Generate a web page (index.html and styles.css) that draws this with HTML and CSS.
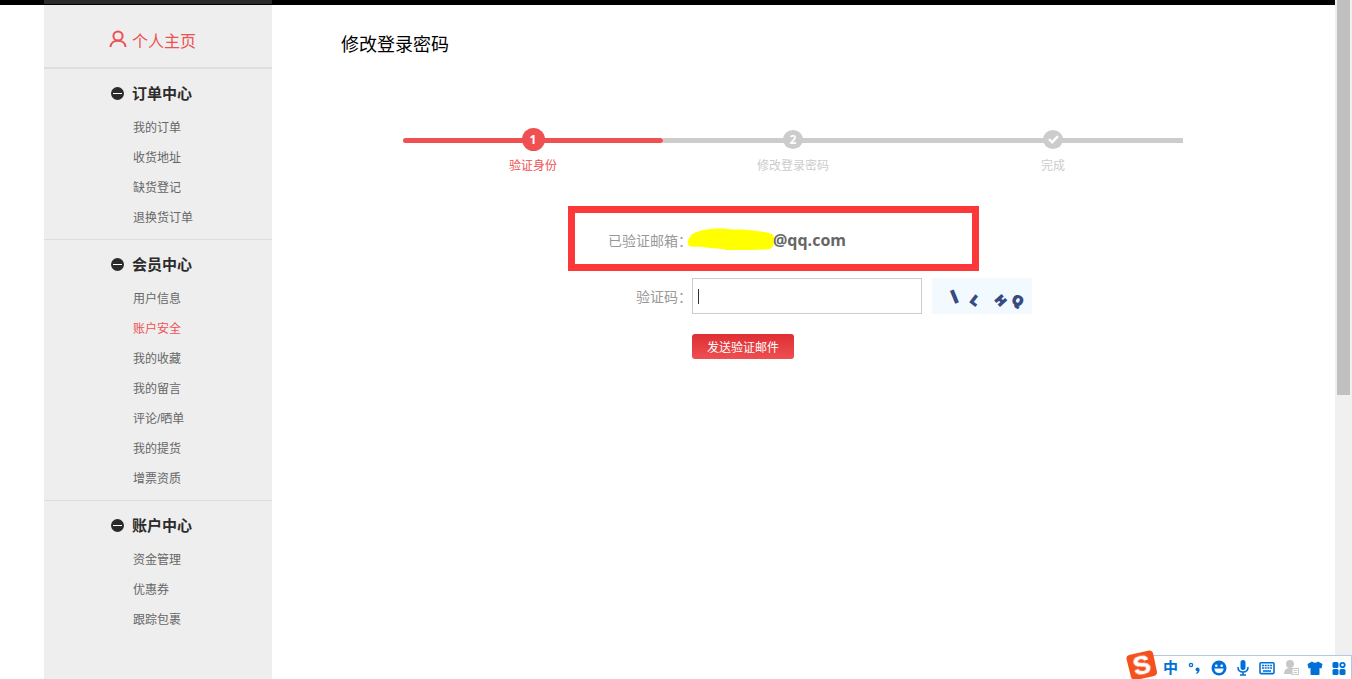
FILE: index.html
```html
<!DOCTYPE html>
<html lang="zh-CN">

<head>
    <meta charset="UTF-8">
    <meta name="viewport" content="width=device-width, initial-scale=1.0">
    <title>修改登录密码</title>
    <link rel="stylesheet" href="styles.css">
</head>

<body>
    <div class="page">
        <div class="topbar"><div class="topbar-menu"></div></div>
        <div class="container">
            <nav class="sidebar">
                <a class="home" href="#">
                    <svg width="18" height="18" viewBox="0 0 18 18" fill="none" stroke="#ef5052" stroke-width="2">
                        <circle cx="9" cy="6" r="4.6" />
                        <path d="M1.4 17C1.8 13 5 10.7 9 10.7S16.2 13 16.6 17" />
                    </svg>
                    <span>个人主页</span>
                </a>
                <div class="group">
                    <h3><i class="minus"></i>订单中心</h3>
                    <ul>
                        <li><a href="#">我的订单</a></li>
                        <li><a href="#">收货地址</a></li>
                        <li><a href="#">缺货登记</a></li>
                        <li><a href="#">退换货订单</a></li>
                    </ul>
                </div>
                <div class="group">
                    <h3><i class="minus"></i>会员中心</h3>
                    <ul>
                        <li><a href="#">用户信息</a></li>
                        <li><a class="active" href="#">账户安全</a></li>
                        <li><a href="#">我的收藏</a></li>
                        <li><a href="#">我的留言</a></li>
                        <li><a href="#">评论/晒单</a></li>
                        <li><a href="#">我的提货</a></li>
                        <li><a href="#">增票资质</a></li>
                    </ul>
                </div>
                <div class="group">
                    <h3><i class="minus"></i>账户中心</h3>
                    <ul>
                        <li><a href="#">资金管理</a></li>
                        <li><a href="#">优惠券</a></li>
                        <li><a href="#">跟踪包裹</a></li>
                    </ul>
                </div>
            </nav>
            <main class="content">
                <h1>修改登录密码</h1>
                <ol class="steps">
                    <li class="current">
                        <div class="line"><span class="dot">1</span></div>
                        <p>验证身份</p>
                    </li>
                    <li>
                        <div class="line"><span class="dot">2</span></div>
                        <p>修改登录密码</p>
                    </li>
                    <li>
                        <div class="line">
                            <span class="dot">
                                <svg width="11" height="9" viewBox="0 0 11 9" fill="none" stroke="#fff" stroke-width="2.4">
                                    <path d="M1 4.2L4.2 7.2L10 1.2" />
                                </svg>
                            </span>
                        </div>
                        <p>完成</p>
                    </li>
                </ol>
                <form class="verify">
                    <div class="row email">
                        <span class="label">已验证邮箱：</span>
                        <svg class="marker" width="88" height="23" viewBox="0 0 88 23">
                            <path fill="#ffff00" d="M1 13C2 9 5 5 11 3.500C18 1 26 .5 37 .5C44 2 56 1 66 2.500C76 4 83 4 86 7C88 11 87 16 85 20C81 22 74 21.500 66 22H39C34 20 27 21 20 19.500C14 18 9 19 4 18.500C1 18 0 16 1 13Z" />
                        </svg>
                        <b>@qq.com</b>
                    </div>
                    <div class="row">
                        <label class="label" for="code">验证码：</label>
                        <input type="text" id="code">
                        <svg class="captcha" width="100" height="36" viewBox="0 0 100 36" role="img" aria-label="验证码图片">
                            <rect width="100" height="36" fill="#f2faff" />
                            <g fill="#364b80" stroke="#364b80" stroke-width="1.6">
                                <text x="20" y="25" transform="rotate(-22 22 19)" font-size="17">i</text>
                                <text x="40" y="27" transform="rotate(38 44 22)" font-size="12">L</text>
                                <text x="64" y="27" transform="rotate(48 69 23)" font-size="12">H</text>
                                <text x="81" y="27" transform="rotate(28 86 22)" font-size="13">Q</text>
                            </g>
                        </svg>
                    </div>
                    <div class="row submit">
                        <button type="button">发送验证邮件</button>
                    </div>
                </form>
            </main>
        </div>
    </div>
    <div class="scrollbar"><div class="thumb"></div></div>

    <!-- input method toolbar -->
    <div class="ime">
        <svg class="ime-logo" width="32" height="29" viewBox="0 0 32 29">
            <path fill="#f4511e" d="M3 5L23 .5Q26 0 27 3L31 22Q31 25 28 26L10 30Q6 30 5 27L.5 9Q0 6 3 5Z" />
            <text x="7" y="24" transform="rotate(-12 16 15)" font-size="26" fill="#fff" stroke="#fff" stroke-width=".6">S</text>
        </svg>
        <span class="ime-lang">中</span>
        <svg width="16" height="16" viewBox="0 0 16 16">
            <circle cx="4" cy="5" r="1.600" fill="none" stroke="#0070d8" stroke-width="1.400" />
            <path fill="#0070d8" d="M8.500 9.500A2 2 0 0 1 12.600 9.500Q12.600 12.500 9.500 14L9 13Q10.500 12.200 10.500 11.300Q8.500 11.300 8.500 9.500Z" />
        </svg>
        <svg width="16" height="16" viewBox="0 0 16 16">
            <circle cx="8" cy="8" r="7.500" fill="#0070d8" />
            <circle cx="5.300" cy="5.800" r="1.300" fill="#fff" />
            <circle cx="10.700" cy="5.800" r="1.300" fill="#fff" />
            <path fill="#fff" d="M3.300 8.500H12.700Q12 13 8 13T3.300 8.500Z" />
        </svg>
        <svg width="16" height="16" viewBox="0 0 16 16">
            <rect x="5.500" y="0" width="5" height="10" rx="2.500" fill="#0070d8" />
            <path d="M3 7Q3 12 8 12T13 7M8 12V15M5 15H11" fill="none" stroke="#0070d8" stroke-width="1.600" />
        </svg>
        <svg width="16" height="16" viewBox="0 0 16 16">
            <rect x="1" y="2.800" width="14" height="10.800" rx="1" fill="none" stroke="#0070d8" stroke-width="1.600" />
            <path d="M3 5.500H13M3 8H13" stroke="#0070d8" stroke-width="1.600" stroke-dasharray="2 .7" />
            <path d="M4 11H12" stroke="#0070d8" stroke-width="1.600" />
        </svg>
        <svg width="16" height="16" viewBox="0 0 16 16">
            <circle cx="7" cy="4" r="4" fill="#c8c8c8" />
            <path fill="#c8c8c8" d="M1 14Q1 8.500 6 8H9V14Z" />
            <rect x="9" y="8.500" width="6.500" height="6" fill="#fff" stroke="#c8c8c8" />
            <path d="M10.500 10.500H14M10.500 12.500H14" stroke="#c8c8c8" />
        </svg>
        <svg width="16" height="16" viewBox="0 0 16 16">
            <path fill="#0070d8" d="M5 1.500Q8 4 11 1.500L15.500 4L14.500 8.500L12.500 8V14Q12.500 15 11.500 15H4.500Q3.500 15 3.500 14V8L1.500 8.500L.5 4Z" />
        </svg>
        <svg width="16" height="16" viewBox="0 0 16 16" fill="#0070d8">
            <rect x="1.500" y="2" width="6" height="6" rx="1.500" />
            <circle cx="11.500" cy="5" r="2.200" fill="none" stroke="#0070d8" stroke-width="1.800" />
            <rect x="1.500" y="9" width="6" height="6" rx="1.500" />
            <rect x="8.500" y="9" width="6" height="6" rx="1.500" />
        </svg>
    </div>
</body>

</html>
```

FILE: styles.css
```css
* {
    margin: 0;
    padding: 0;
    box-sizing: border-box;
}

body {
    display: flex;
    min-height: 100vh;
    background: #fff;
    color: #666;
    font-family: "Liberation Sans", "Noto Sans CJK SC", sans-serif;
    font-size: 12px;
}

ul,
ol {
    list-style: none;
}

a {
    color: inherit;
    text-decoration: none;
}

svg {
    flex: none;
}

.page {
    flex: 1;
    display: flex;
    flex-direction: column;
}

.topbar {
    height: 5px;
    padding-left: 44px;
    background: #000;
}

.topbar-menu {
    width: 228px;
    height: 4px;
    background: #2b2b2b;
}

.container {
    flex: 1;
    display: flex;
    padding: 0 21px 0 44px;
}

/* sidebar */
.sidebar {
    width: 228px;
    flex: none;
    background: #eee;
}

.home {
    display: flex;
    align-items: center;
    gap: 5px;
    height: 64px;
    padding: 8px 0 0 65px;
    border-bottom: 2px solid #ddd;
    color: #ef5052;
    font-size: 16px;
}

.home svg {
    margin-bottom: 2px;
}

.group {
    padding: 7px 0 6px;
    border-bottom: 1px solid #ddd;
}

.group:last-child {
    border-bottom: 0;
}

.group h3 {
    display: flex;
    align-items: center;
    gap: 8px;
    margin-bottom: 1px;
    padding-left: 67px;
    line-height: 36px;
    font-size: 15px;
    color: #2b2b2b;
}

.minus {
    display: flex;
    align-items: center;
    justify-content: center;
    width: 13px;
    height: 13px;
    margin-bottom: 1px;
    border-radius: 50%;
    background: #2b2b2b;
}

.minus::before {
    content: "";
    width: 9px;
    height: 1px;
    background: #fff;
}

.group li {
    padding-left: 89px;
    line-height: 30px;
}

.group .active {
    color: #ef5052;
}

/* content */
.content {
    flex: 1;
    padding-top: 28px;
}

.content h1 {
    padding-left: 69px;
    line-height: 24px;
    font-size: 18px;
    font-weight: normal;
    color: #000;
}

.steps {
    display: flex;
    max-width: 780px;
    margin: 81px auto 0;
    color: #ccc;
    text-align: center;
}

.steps li {
    flex: 1;
}

.line {
    display: flex;
    align-items: center;
    justify-content: center;
    height: 5px;
    background: #ccc;
}

.dot {
    display: flex;
    align-items: center;
    justify-content: center;
    flex: none;
    width: 20px;
    height: 19px;
    margin-bottom: 2px;
    border-radius: 50%;
    background: #ccc;
    color: #fff;
    font-family: "Open Sans", sans-serif;
    font-weight: bold;
}

.steps p {
    margin-top: 14px;
    line-height: 18px;
}

.current {
    color: #ef5052;
}

.current .line,
.current .dot {
    background: #ef5052;
}

.current .line {
    border-radius: 3px;
}

.current .dot {
    width: 23px;
    height: 23px;
}

.verify {
    max-width: 780px;
    margin: 31px auto 0;
    padding-left: 165px;
}

.row {
    display: flex;
    align-items: center;
    margin-bottom: 20px;
}

.label {
    width: 124px;
    flex: none;
    text-align: right;
    font-size: 14px;
    color: #999;
}

.email {
    width: 411px;
    height: 65px;
    margin-bottom: 7px;
    padding-top: 2px;
    border: 7px solid #fd3838;
}

.email .label {
    width: 117px;
}

.marker {
    margin: 0 -2px 0 -5px;
}

.email b {
    font-family: "Open Sans", sans-serif;
    font-size: 16px;
}

#code {
    width: 230px;
    height: 36px;
    margin-right: 10px;
    padding: 0 6px;
    border: 1px solid #ccc;
    outline: none;
    background: linear-gradient(#333, #333) no-repeat 5px center / 1px 15px;
    color: #666;
    font-size: 14px;
}

.captcha,
.ime-logo {
    font-family: "Liberation Sans", sans-serif;
    font-weight: bold;
}

.submit {
    padding-left: 124px;
}

.submit button {
    width: 102px;
    height: 25px;
    border: 0;
    border-radius: 3px;
    background: linear-gradient(#de2e33, #ee4f52);
    color: #fff;
    font-family: inherit;
    font-size: 12px;
}

/* scrollbar */
.scrollbar {
    width: 17px;
    flex: none;
    padding-left: 2px;
    background: #f0f0f0;
}

.thumb {
    width: 13px;
    height: 395px;
    background: #c0c0c0;
}

/* ime */
.ime {
    position: fixed;
    right: 0;
    bottom: 0;
    display: flex;
    align-items: center;
    gap: 8px;
    height: 24px;
    padding: 1px 4px 0 29px;
    border: 1px solid #b4c8e4;
    border-bottom: 0;
    background: #fff;
}

.ime-logo {
    position: absolute;
    left: -8px;
    bottom: 0;
}

.ime-lang {
    width: 16px;
    color: #0070d8;
    font-size: 15px;
    font-weight: bold;
    line-height: 16px;
}
```
